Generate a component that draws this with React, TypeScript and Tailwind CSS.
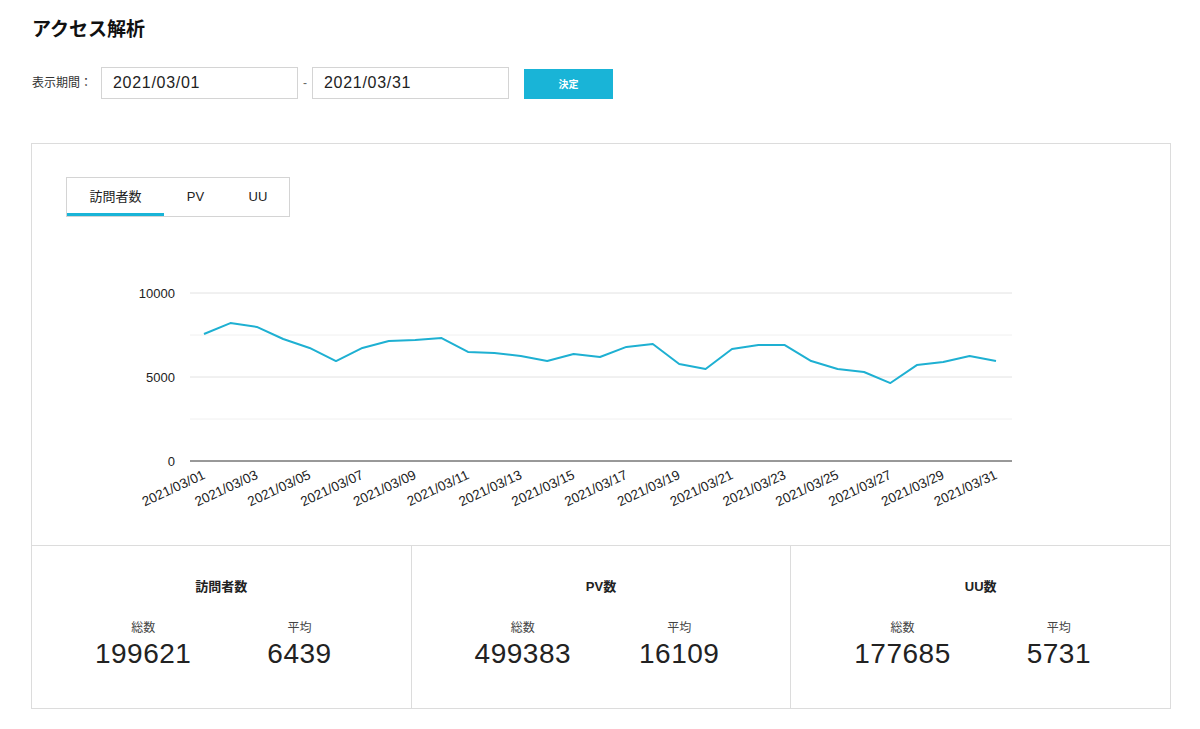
import React from "react";

const jp = "font-['Helvetica_Neue','Liberation_Sans','Noto_Sans_CJK_JP',sans-serif]";

const visitors = [
  7560, 8210, 7980, 7260, 6730, 5950, 6730, 7140, 7200, 7320, 6490, 6430, 6250, 5950, 6370, 6190,
  6790, 6960, 5770, 5480, 6670, 6900, 6900, 5950, 5480, 5300, 4640, 5710, 5890, 6250, 5950,
];

// chart coords are relative to the svg (page x - 32, page y - 217)
const X0 = 172;
const STEP = 26.4;
const yOf = (v: number) => 244 - (v * 84) / 5000;

const LineChart = () => {
  const pts = visitors.map((v, i) => `${X0 + i * STEP},${yOf(v)}`).join(" ");
  return (
    <svg width="1138" height="328" className="block">
      {/* grid */}
      {[76, 118, 160, 202].map((y, i) => (
        <line key={y} x1="158" x2="980" y1={y} y2={y} stroke={i % 2 === 0 ? "#e2e2e2" : "#f0f0f0"} strokeWidth="1" />
      ))}
      <line x1="158" x2="980" y1="244" y2="244" stroke="#333" strokeWidth="1" />
      {/* y labels */}
      {[
        ["10000", 76],
        ["5000", 160],
        ["0", 244],
      ].map(([t, y]) => (
        <text key={t} x="143" y={Number(y) + 5} textAnchor="end" fontSize="13" fill="#222" fontFamily="Liberation Sans, Arial, sans-serif">
          {t}
        </text>
      ))}
      <polyline points={pts} fill="none" stroke="#1eb0d2" strokeWidth="2" strokeLinejoin="round" />
      {/* x labels */}
      {visitors.map((_, i) => {
        if (i % 2 !== 0) return null;
        const x = X0 + i * STEP + 2;
        const y = 261;
        const d = String(i + 1).padStart(2, "0");
        return (
          <text
            key={i}
            x={x}
            y={y}
            textAnchor="end"
            fontSize="13.5"
            fill="#222"
            fontFamily="Liberation Sans, Arial, sans-serif"
            transform={`rotate(-25 ${x} ${y})`}
          >
            {`2021/03/${d}`}
          </text>
        );
      })}
    </svg>
  );
};

const StatCell = ({ title, total, avg, last }: { title: string; total: string; avg: string; last?: boolean }) => (
  <div className={`flex-1 flex flex-col items-center pt-[31px] ${last ? "" : "border-r border-[#dcdcdc]"}`}>
    <div className="text-[13px] leading-5 font-bold text-[#222]">{title}</div>
    <div className="w-full px-[33px] grid grid-cols-2 mt-[22px]">
      <div className="flex flex-col items-center">
        <span className="text-[12px] leading-[18px] text-[#444]">総数</span>
        <span className="text-[28px] leading-[34px] text-[#222] tracking-[0.5px]">{total}</span>
      </div>
      <div className="flex flex-col items-center">
        <span className="text-[12px] leading-[18px] text-[#444]">平均</span>
        <span className="text-[28px] leading-[34px] text-[#222] tracking-[0.5px]">{avg}</span>
      </div>
    </div>
  </div>
);

export default function App() {
  return (
    <div className={`w-[1200px] h-[729px] bg-white px-[31px] pt-[16px] ${jp}`}>
      {/* Title */}
      <h1 className="pl-px text-[19px] leading-[28px] font-bold text-[#111]">アクセス解析</h1>

      {/* Period */}
      <div className="flex items-center mt-[23px] pl-px">
        <span className="text-[12px] text-[#333] w-[69px]">表示期間：</span>
        <div className="w-[197px] h-[32px] border border-[#d4d4d4] flex items-center pl-[11px] text-[16px] tracking-[0.7px] text-[#222]">
          2021/03/01
        </div>
        <span className="w-[14px] text-center text-[12px] text-[#666]">-</span>
        <div className="w-[197px] h-[32px] border border-[#d4d4d4] flex items-center pl-[11px] text-[16px] tracking-[0.7px] text-[#222]">
          2021/03/31
        </div>
        <button className="ml-[15px] mt-[2px] w-[89px] h-[30px] bg-[#19b4d7] text-white text-[10px] font-bold">決定</button>
      </div>

      {/* Card */}
      <div className="mt-[44px] border border-[#dcdcdc] w-[1140px]">
        <div className="pt-[33px]">
          <div className="ml-[34px] w-[224px] h-[40px] border border-[#d4d4d4] flex text-[13px] text-[#222]">
            <div className="w-[97px] flex items-center justify-center border-b-[3px] border-[#19b4d7] pt-[3px]">訪問者数</div>
            <div className="w-[63px] flex items-center justify-center">PV</div>
            <div className="w-[62px] flex items-center justify-center">UU</div>
          </div>
          <LineChart />
        </div>
        <div className="flex h-[163px] border-t border-[#dcdcdc]">
          <StatCell title="訪問者数" total="199621" avg="6439" />
          <StatCell title="PV数" total="499383" avg="16109" />
          <StatCell title="UU数" total="177685" avg="5731" last />
        </div>
      </div>
    </div>
  );
}
